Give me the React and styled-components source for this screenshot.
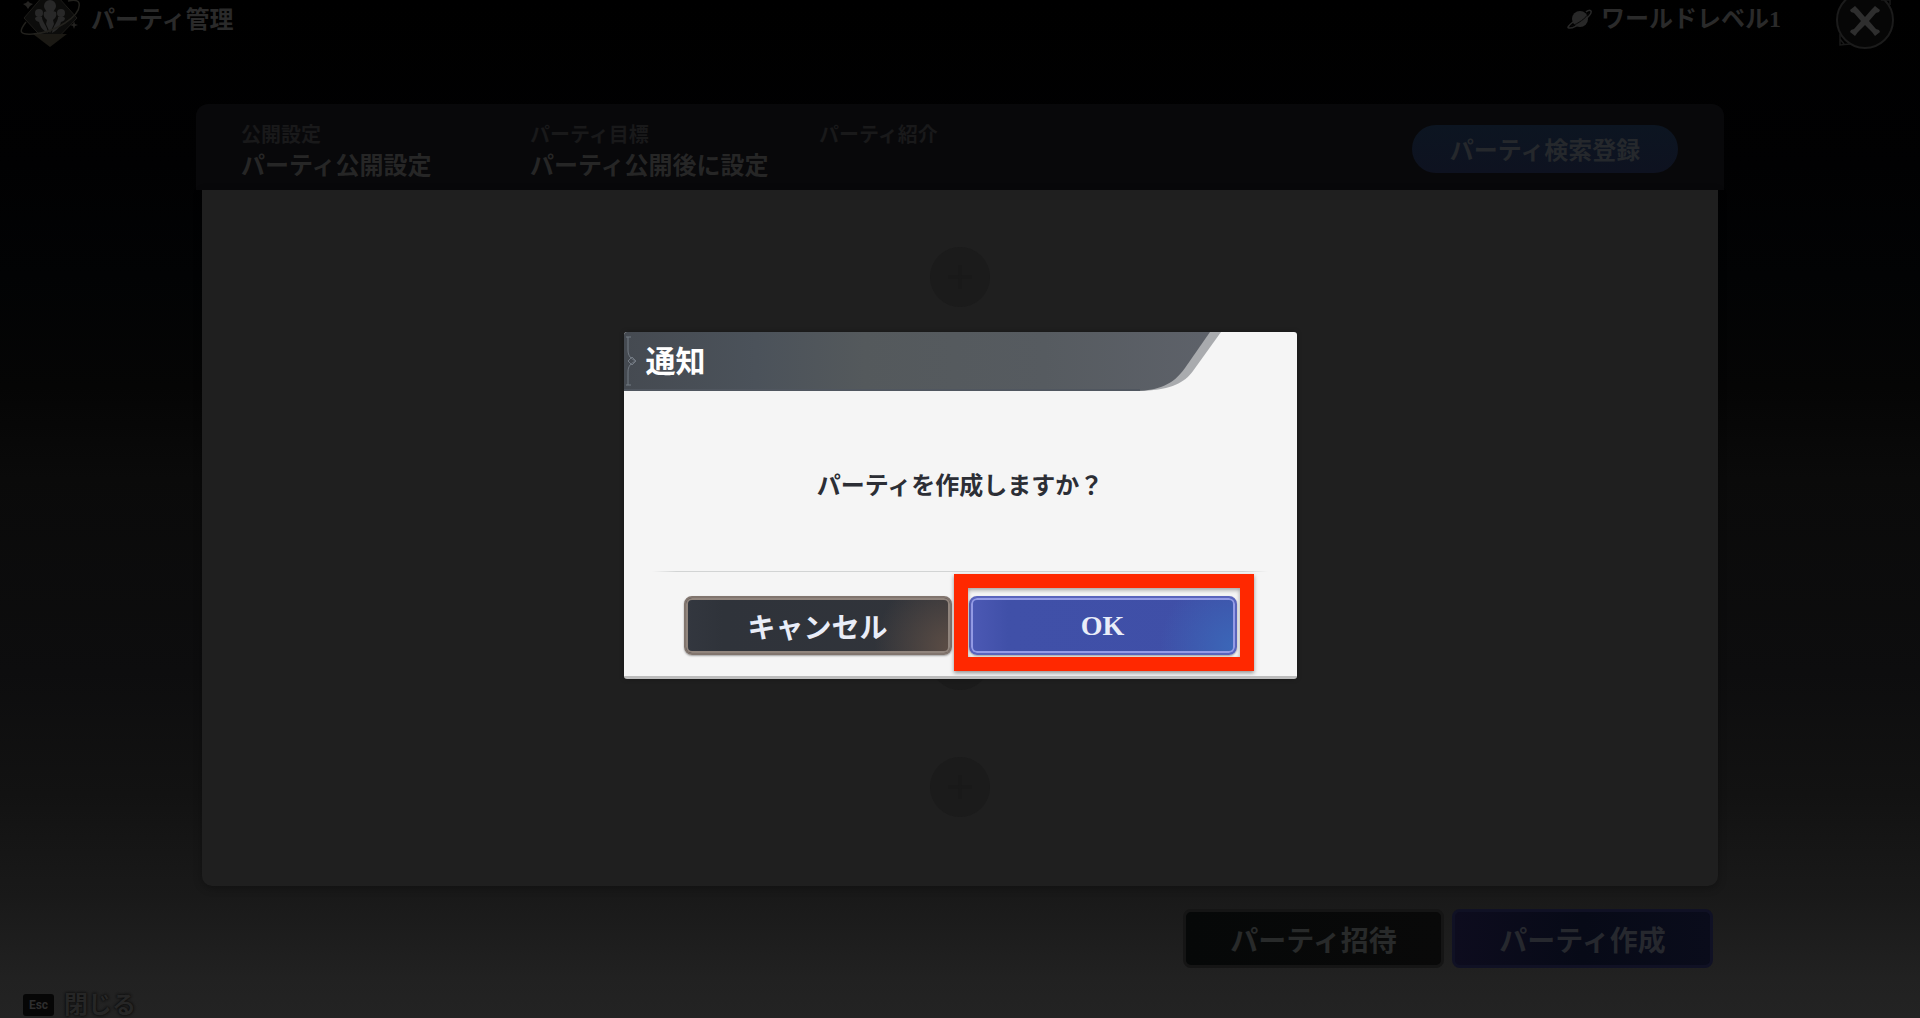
import React from 'react'
import styled, { createGlobalStyle } from 'styled-components'

const GlobalStyle = createGlobalStyle`
  * {
    box-sizing: border-box;
  }
  body {
    margin: 0;
    background: #000;
    font-family: 'Noto Sans CJK JP', 'Noto Sans', sans-serif;
  }
  button {
    font-family: inherit;
    cursor: pointer;
  }
`

const Screen = styled.div`
  position: relative;
  display: flex;
  flex-direction: column;
  min-height: 100vh;
  overflow: hidden;
  color: #2a2a2a;
  background: linear-gradient(
    #000 0%, #010102 16%, #020304 27%, #050505 38%, #0a0a0a 47%, #0d0d0e 66%, #121212 78%, #191919 88%, #212121 96%, #232323 100%
  );
`

const TopBar = styled.header`
  display: flex;
  justify-content: space-between;
  height: 104px;
  padding: 0 25px 0 20px;
`

const TopGroup = styled.div`
  display: flex;
  align-items: flex-start;
  gap: ${({ $gap }) => $gap}px;
`

const TopTitle = styled.h1`
  margin: 0;
  font-size: 24px;
  line-height: 36px;
  font-weight: 700;
`

const WorldLevel = styled.div`
  display: flex;
  align-items: center;
  gap: 8px;
  margin-right: 54px;
  font-size: 24px;
  line-height: 38px;
  font-weight: 700;
  font-family: 'Liberation Serif', 'Noto Sans CJK JP', serif;
`

const IconButton = styled.button`
  display: block;
  padding: 0;
  border: 0;
  background: none;
  line-height: 0;
`

const Panel = styled.main`
  display: flex;
  flex-direction: column;
  flex: 1;
  margin: 0 196px;
`

const PanelHead = styled.div`
  display: flex;
  align-items: flex-end;
  height: 86px;
  padding: 0 46px 11px 45px;
  border-radius: 12px 12px 0 0;
  background: #08080a;
`

const Setting = styled.dl`
  width: 289px;
  height: 62px;
  margin: 0;
`

const SettingLabel = styled.dt`
  font-size: 20px;
  line-height: 34px;
  font-weight: 700;
  color: #19191a;
`

const SettingValue = styled.dd`
  margin: 0;
  font-size: 24px;
  line-height: 26px;
  font-weight: 700;
  color: #262626;
`

const SearchButton = styled.button`
  width: 266px;
  height: 48px;
  margin: 0 0 6px auto;
  padding: 0;
  border: 0;
  border-radius: 24px;
  font-size: 24px;
  line-height: 46px;
  font-weight: 700;
  color: #25282c;
  background: linear-gradient(#0c1521, #0e1220);
`

const Slots = styled.div`
  display: flex;
  flex-direction: column;
  align-items: center;
  justify-content: space-between;
  flex: 1;
  margin: 0 6px;
  padding: 57px 0 69px;
  border-radius: 0 0 10px 10px;
  background: #1f1f1f;
  box-shadow: 0 2px 8px rgba(0, 0, 0, 0.3);
`

const Slot = styled.button`
  display: flex;
  align-items: center;
  justify-content: center;
  width: 60px;
  height: 60px;
  padding: 0;
  border: 0;
  border-radius: 50%;
  background: #1b1b1b;
`

const Actions = styled.div`
  display: flex;
  justify-content: flex-end;
  gap: 8px;
  padding: 23px 207px 0 0;
`

const ActionButton = styled.button`
  width: 261px;
  height: 59px;
  padding: 0;
  border: 3px solid ${({ $primary }) => ($primary ? '#101124' : '#151515')};
  border-radius: 8px;
  font-size: 28px;
  line-height: 48px;
  font-weight: 700;
  color: ${({ $primary }) => ($primary ? '#26282e' : '#282a2a')};
  background: ${({ $primary }) => ($primary
    ? 'linear-gradient(90deg, #0d0c1e, #070a17 50%, #0a0c1b)'
    : 'linear-gradient(90deg, #060808, #090909)')};
`

const Footer = styled.footer`
  display: flex;
  align-items: center;
  gap: 10px;
  height: 50px;
  padding: 20px 0 0 23px;
`

const Key = styled.kbd`
  width: 31px;
  height: 22px;
  margin-top: 4px;
  border-radius: 3px;
  font-family: Roboto, sans-serif;
  font-size: 12px;
  line-height: 22px;
  font-weight: 700;
  text-align: center;
  color: #2e2e2e;
  background: #060606;
`

const CloseHint = styled.button`
  padding: 0;
  border: 0;
  font-size: 24px;
  line-height: 28px;
  font-weight: 700;
  color: #262626;
  background: none;
  text-shadow: 0 0 3px #0a0a0a, 0 0 2px #101010;
`

const Overlay = styled.div`
  position: absolute;
  inset: 0;
  display: flex;
  justify-content: center;
  align-items: flex-start;
  padding-top: 332px;
`

const Dialog = styled.section`
  display: flex;
  flex-direction: column;
  width: 673px;
  border-bottom: 3px solid #bcbcbc;
  border-radius: 3px;
  overflow: hidden;
  background: #f5f5f5;
  box-shadow: 0 0 5px rgba(0, 0, 0, 0.25);
`

const DialogHead = styled.div`
  display: grid;
  height: 59px;

  > * {
    grid-area: 1 / 1;
  }
`

const DialogTitle = styled.h2`
  margin: 0;
  padding-left: 22px;
  font-size: 30px;
  line-height: 55px;
  font-weight: 700;
  color: #fff;
  z-index: 1;
`

const Message = styled.p`
  margin: 0;
  padding: 75px 0 69px;
  font-size: 24px;
  line-height: 36px;
  font-weight: 700;
  text-align: center;
  color: #2c2e35;
`

const Divider = styled.hr`
  width: 616px;
  height: 1px;
  margin: 0 auto;
  border: 0;
  background: linear-gradient(90deg, transparent, #d2d4d4 4%, #d2d4d4 96%, transparent);
`

const DialogButtons = styled.div`
  display: flex;
  justify-content: center;
  gap: 17px;
  padding: 24px 0 21px;
`

const DialogButton = styled.button`
  width: 268px;
  height: 59px;
  padding: 0;
  border: 2px solid ${({ $primary }) => ($primary ? '#5a64bd' : '#81756e')};
  border-radius: 8px;
  font-family: 'Liberation Serif', 'Noto Sans CJK JP', serif;
  font-size: 28px;
  font-weight: 700;
  color: #e9edf8;
  background: ${({ $primary }) => ($primary
    ? 'radial-gradient(circle at 100% 90%, #3b67b8, transparent 28%), linear-gradient(90deg, #4c59b4, #4050a8 14%, #3f4fa7)'
    : 'radial-gradient(circle at 100% 90%, #5c4d45, transparent 28%), linear-gradient(90deg, #33373f, #2f333a 14%, #31343a)')};
  box-shadow:
    inset 0 0 0 2px ${({ $primary }) => ($primary ? '#949be6' : '#91857d')},
    0 1px 2px rgba(0, 0, 0, 0.35);
`

const Marked = styled.div`
  position: relative;
  display: flex;

  &::after {
    content: '';
    position: absolute;
    inset: -22px -17px -16px -15px;
    border: 14px solid #ff2800;
    box-shadow: 0 2px 4px rgba(0, 0, 0, 0.4), inset 0 2px 4px rgba(0, 0, 0, 0.35);
    pointer-events: none;
  }
`

function PartyEmblem() {
  return (
    <svg width="63" height="50" viewBox="0 -2 63 50" fill="none">
      <path d="M30 -14 57 16 30 44 4 16Z" fill="#0c0c0b" stroke="#1d1c19" />
      <path d="M13 32H47L30 45Z" fill="#1b1914" />
      <g fill="#282828">
        <circle cx="30" cy="4" r="6" />
        <path d="M24 10c4-2 8-2 12 0 1 3 0 6-3 8l1 4-4 9-4-9 1-4c-3-2-4-5-3-8Z" />
        <circle cx="19" cy="11" r="4" />
        <path d="M15 16c2-2 5-2 7-1 0 5 5 8 6 16-6-3-8-7-9-11-3-1-4-2-4-4Z" />
        <circle cx="41" cy="11" r="4" />
        <path d="M45 16c-2-2-5-2-7-1 0 5-5 8-6 16 6-3 8-7 9-11 3-1 4-2 4-4Z" />
      </g>
      <path d="M6 20C-2 30 0 33 13 32 34 31 62 14 59 1 58 -2 53 -2 48 -1" stroke="#22211d" strokeWidth="1.5" />
      <path d="M8 -1l2 2L13 2 10 4 8 7 6 4 3 2l3-1Z M54 19l1 3 3 1-3 1-1 3-1-3-3-1 3-1Z" fill="#242321" />
    </svg>
  )
}

function Planet() {
  return (
    <svg width="26" height="20" viewBox="0 0 26 20" fill="none">
      <circle cx="13" cy="10" r="8" fill="#282828" />
      <path d="M6 13C1 17 0 19 2 19 8 20 26 6 24 2 23 1 21 1 19 3" stroke="#282828" strokeWidth="1.5" />
      <path d="M4 17C11 15 19 9 22 4" stroke="#080808" strokeWidth="1" />
    </svg>
  )
}

function CloseMark() {
  return (
    <svg width="60" height="52" viewBox="0 0 60 52" fill="none">
      <circle cx="30" cy="20" r="28" fill="#060606" stroke="#1b1b1b" strokeWidth="2" />
      <path d="M5 34v11l10-1M5 39l4 5M46 0h9v5" stroke="#191919" strokeWidth="1.5" />
      <path
        d="M15 10 20 6 23 9 30 17 37 9 40 6 45 10 44 12 41 13 34 21 41 29 44 30 45 32 40 36 37 32 30 25 23 32 20 36 15 32 16 30 19 29 26 21 19 13 16 12Z"
        fill="#2e2e2e"
      />
    </svg>
  )
}

function HeadShape() {
  return (
    <svg width="673" height="59" viewBox="0 0 673 59" fill="none">
      <defs>
        <linearGradient id="headFill" x1="0" y1="0" x2="600" y2="0" gradientUnits="userSpaceOnUse">
          <stop offset="0" stopColor="#454a51" />
          <stop offset="0.22" stopColor="#4b525a" />
          <stop offset="0.4" stopColor="#54595c" />
          <stop offset="0.7" stopColor="#565b60" />
          <stop offset="1" stopColor="#5e626a" />
        </linearGradient>
      </defs>
      <path d="M500 59H520C548 57 560 51 569 39L597 0H580Z" fill="#a9abae" />
      <path d="M0 0H586L561 36C549 53 535 58 512 59H0Z" fill="url(#headFill)" />
      <path d="M0 58H516" stroke="#50565f" strokeWidth="2" />
      <g stroke="#737a83">
        <path d="M4 5V18C4 24 7 27 12 29 7 31 4 34 4 40V53" />
        <path d="M2 5h5M2 53h5M8 25l4 4-4 4-4-4Z" />
      </g>
    </svg>
  )
}

export default function App() {
  return (
    <>
      <GlobalStyle />
      <Screen>
        <TopBar>
          <TopGroup $gap={8}>
            <PartyEmblem />
            <TopTitle>パーティ管理</TopTitle>
          </TopGroup>
          <TopGroup $gap={0}>
            <WorldLevel>
              <Planet />
              ワールドレベル1
            </WorldLevel>
            <IconButton type="button" aria-label="閉じる">
              <CloseMark />
            </IconButton>
          </TopGroup>
        </TopBar>

        <Panel>
          <PanelHead>
            <Setting>
              <SettingLabel>公開設定</SettingLabel>
              <SettingValue>パーティ公開設定</SettingValue>
            </Setting>
            <Setting>
              <SettingLabel>パーティ目標</SettingLabel>
              <SettingValue>パーティ公開後に設定</SettingValue>
            </Setting>
            <Setting>
              <SettingLabel>パーティ紹介</SettingLabel>
            </Setting>
            <SearchButton type="button">パーティ検索登録</SearchButton>
          </PanelHead>
          <Slots>
            {[1, 2, 3, 4, 5].map((n) => (
              <Slot key={n} type="button" aria-label={`メンバー${n}`}>
                <svg width="28" height="28" viewBox="0 0 28 28">
                  <path d="M14 2V26M2 14H26" stroke="#191919" strokeWidth="3" />
                </svg>
              </Slot>
            ))}
          </Slots>
        </Panel>

        <Actions>
          <ActionButton type="button">パーティ招待</ActionButton>
          <ActionButton type="button" $primary>パーティ作成</ActionButton>
        </Actions>

        <Footer>
          <Key>Esc</Key>
          <CloseHint type="button">閉じる</CloseHint>
        </Footer>

        <Overlay>
          <Dialog role="dialog" aria-modal="true" aria-labelledby="dialog-title">
            <DialogHead>
              <HeadShape />
              <DialogTitle id="dialog-title">通知</DialogTitle>
            </DialogHead>
            <Message>パーティを作成しますか？</Message>
            <Divider />
            <DialogButtons>
              <DialogButton type="button">キャンセル</DialogButton>
              <Marked>
                <DialogButton type="button" $primary>OK</DialogButton>
              </Marked>
            </DialogButtons>
          </Dialog>
        </Overlay>
      </Screen>
    </>
  )
}
